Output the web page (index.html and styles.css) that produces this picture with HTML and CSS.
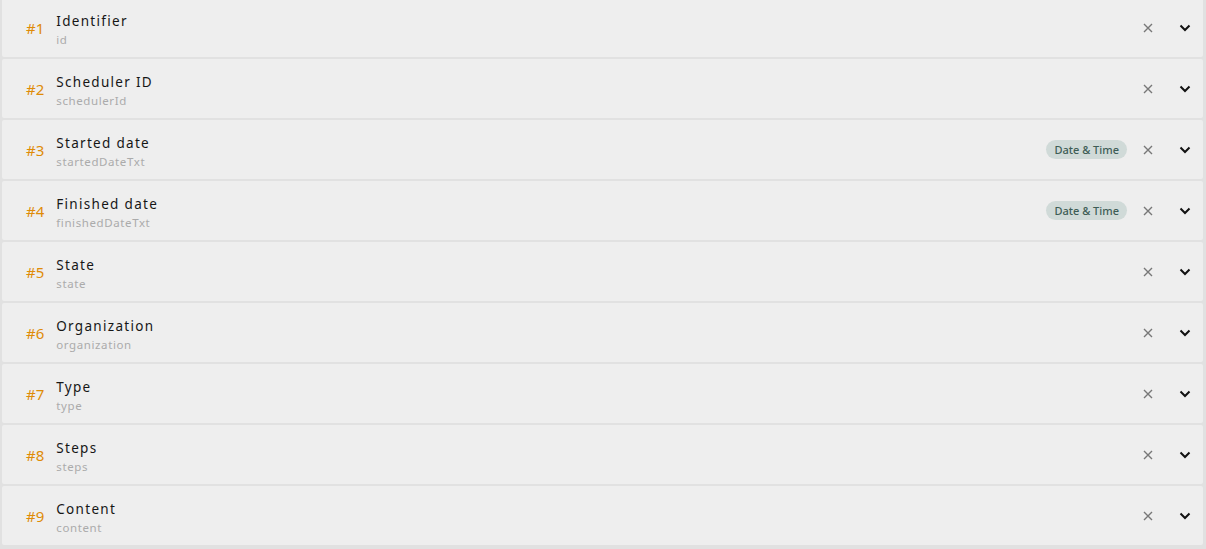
FILE: index.html
```html
<!DOCTYPE html>
<html lang="en">
<head>
  <meta charset="UTF-8">
  <title>Columns</title>
  <link rel="stylesheet" href="styles.css">
</head>
<body>
  <div class="field-list">
    <div class="field-row">
      <span class="field-num">#1</span>
      <div class="field-text"><div class="field-title">Identifier</div><div class="field-key">id</div></div>
      <div class="field-actions"><svg class="btn-x" viewBox="0 0 10 10"><path d="M1 1 L9 9 M9 1 L1 9"/></svg><svg class="chev" viewBox="0 0 12 8"><path d="M1.5 1.5 L6 6 L10.5 1.5"/></svg></div>
    </div>
    <div class="field-row">
      <span class="field-num">#2</span>
      <div class="field-text"><div class="field-title">Scheduler ID</div><div class="field-key">schedulerId</div></div>
      <div class="field-actions"><svg class="btn-x" viewBox="0 0 10 10"><path d="M1 1 L9 9 M9 1 L1 9"/></svg><svg class="chev" viewBox="0 0 12 8"><path d="M1.5 1.5 L6 6 L10.5 1.5"/></svg></div>
    </div>
    <div class="field-row">
      <span class="field-num">#3</span>
      <div class="field-text"><div class="field-title">Started date</div><div class="field-key">startedDateTxt</div></div>
      <div class="field-actions"><span class="badge">Date &amp; Time</span><svg class="btn-x" viewBox="0 0 10 10"><path d="M1 1 L9 9 M9 1 L1 9"/></svg><svg class="chev" viewBox="0 0 12 8"><path d="M1.5 1.5 L6 6 L10.5 1.5"/></svg></div>
    </div>
    <div class="field-row">
      <span class="field-num">#4</span>
      <div class="field-text"><div class="field-title">Finished date</div><div class="field-key">finishedDateTxt</div></div>
      <div class="field-actions"><span class="badge">Date &amp; Time</span><svg class="btn-x" viewBox="0 0 10 10"><path d="M1 1 L9 9 M9 1 L1 9"/></svg><svg class="chev" viewBox="0 0 12 8"><path d="M1.5 1.5 L6 6 L10.5 1.5"/></svg></div>
    </div>
    <div class="field-row">
      <span class="field-num">#5</span>
      <div class="field-text"><div class="field-title">State</div><div class="field-key">state</div></div>
      <div class="field-actions"><svg class="btn-x" viewBox="0 0 10 10"><path d="M1 1 L9 9 M9 1 L1 9"/></svg><svg class="chev" viewBox="0 0 12 8"><path d="M1.5 1.5 L6 6 L10.5 1.5"/></svg></div>
    </div>
    <div class="field-row">
      <span class="field-num">#6</span>
      <div class="field-text"><div class="field-title">Organization</div><div class="field-key">organization</div></div>
      <div class="field-actions"><svg class="btn-x" viewBox="0 0 10 10"><path d="M1 1 L9 9 M9 1 L1 9"/></svg><svg class="chev" viewBox="0 0 12 8"><path d="M1.5 1.5 L6 6 L10.5 1.5"/></svg></div>
    </div>
    <div class="field-row">
      <span class="field-num">#7</span>
      <div class="field-text"><div class="field-title">Type</div><div class="field-key">type</div></div>
      <div class="field-actions"><svg class="btn-x" viewBox="0 0 10 10"><path d="M1 1 L9 9 M9 1 L1 9"/></svg><svg class="chev" viewBox="0 0 12 8"><path d="M1.5 1.5 L6 6 L10.5 1.5"/></svg></div>
    </div>
    <div class="field-row">
      <span class="field-num">#8</span>
      <div class="field-text"><div class="field-title">Steps</div><div class="field-key">steps</div></div>
      <div class="field-actions"><svg class="btn-x" viewBox="0 0 10 10"><path d="M1 1 L9 9 M9 1 L1 9"/></svg><svg class="chev" viewBox="0 0 12 8"><path d="M1.5 1.5 L6 6 L10.5 1.5"/></svg></div>
    </div>
    <div class="field-row">
      <span class="field-num">#9</span>
      <div class="field-text"><div class="field-title">Content</div><div class="field-key">content</div></div>
      <div class="field-actions"><svg class="btn-x" viewBox="0 0 10 10"><path d="M1 1 L9 9 M9 1 L1 9"/></svg><svg class="chev" viewBox="0 0 12 8"><path d="M1.5 1.5 L6 6 L10.5 1.5"/></svg></div>
    </div>
  </div>
</body>
</html>
```

FILE: styles.css
```css
body {
  margin: 0;
  padding: 0;
  background-color: #e1e1e1;
  font-family: "Noto Sans", sans-serif;
}

.field-list {
  display: flex;
  flex-direction: column;
  gap: 2px;
  padding: 0 3px 0 2px;
  margin-top: -2px;
}

.field-row {
  display: flex;
  align-items: center;
  height: 59px;
  background-color: #eeeeee;
  border-radius: 2px;
  padding: 0 12px 0 24px;
}

.field-num {
  color: #df8b06;
  font-size: 15px;
  margin-right: 12px;
}

.field-text {
  flex: 1;
  margin-top: 5px;
}

.field-title {
  color: #161616;
  font-size: 13.5px;
  letter-spacing: 1.3px;
  line-height: 20px;
}

.field-key {
  color: #ababab;
  font-size: 11.5px;
  letter-spacing: 0.6px;
  line-height: 18px;
}

.field-actions {
  display: flex;
  align-items: center;
}

.badge {
  background-color: #d0dad8;
  color: #3e5d56;
  font-size: 11px;
  font-weight: 500;
  padding: 2px 8px;
  border-radius: 10px;
  margin-right: 16px;
}

.btn-x {
  width: 10px;
  height: 10px;
  fill: none;
  stroke: #777;
  stroke-width: 1.4;
  margin-right: 26px;
}

.chev {
  width: 12px;
  height: 8px;
  fill: none;
  stroke: #111;
  stroke-width: 2;
}
```
